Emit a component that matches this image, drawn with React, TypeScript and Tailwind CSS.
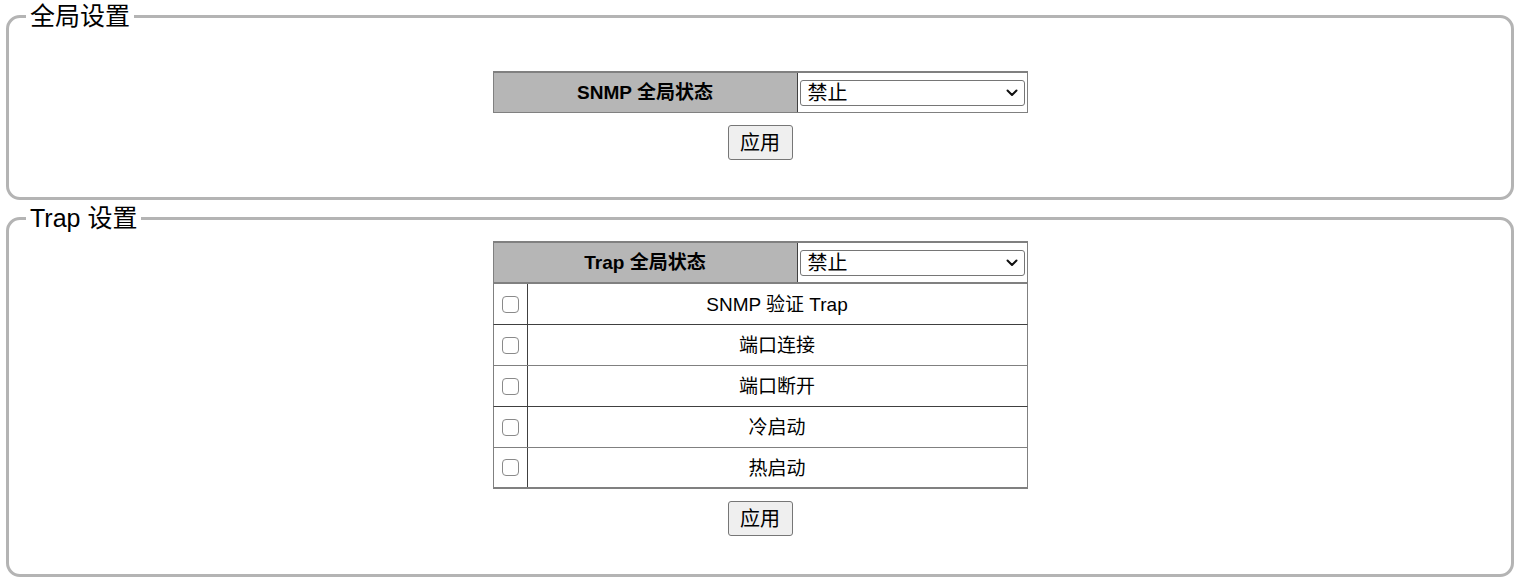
import React from 'react';

const font = { fontFamily: '"Liberation Sans", "Noto Sans CJK SC", sans-serif' };

function Chevron() {
  return (
    <svg width="12" height="8" viewBox="0 0 12 8" className="shrink-0">
      <path d="M1.5 1.5 L6 6 L10.5 1.5" fill="none" stroke="#111" strokeWidth="2" strokeLinecap="round" strokeLinejoin="round" />
    </svg>
  );
}

function FakeSelect() {
  return (
    <div className="w-[225px] h-[26px] border border-[#767676] rounded-[3px] bg-white flex items-center justify-between pl-[7px] pr-[6px]">
      <span className="text-[20px] leading-[24px] text-black pt-[1px]">禁止</span>
      <Chevron />
    </div>
  );
}

function ApplyButton() {
  return (
    <button className="mt-[12px] h-[35px] w-[65px] border border-[#767676] rounded-[3px] bg-[#efefef] text-[20px] leading-[24px] text-black pt-[1px]">
      应用
    </button>
  );
}

function StatusRow({ label, tall }: { label: string; tall?: boolean }) {
  return (
    <div
      className={`w-[535px] flex border-x border-[#808080] border-t-2 ${tall ? 'h-[43px] border-b-2' : 'h-[42px] border-b'}`}
    >
      <div className="w-[304px] bg-[#b6b6b6] border-r border-[#404040] flex items-center justify-center">
        <span className="text-[19px] font-bold text-black pt-[2px]">{label}</span>
      </div>
      <div className="flex-1 flex items-center justify-center">
        <FakeSelect />
      </div>
    </div>
  );
}

const traps = [
  { label: 'SNMP 验证 Trap', line: 'border-b border-[#404040]' },
  { label: '端口连接', line: 'border-b border-[#808080]' },
  { label: '端口断开', line: 'border-b border-[#404040]' },
  { label: '冷启动', line: 'border-b border-[#808080]' },
  { label: '热启动', line: 'border-b-2 border-[#808080]' },
];

export default function App() {
  return (
    <div className="w-[1520px] h-[582px] bg-white text-black overflow-hidden" style={font}>
      {/* 全局设置 */}
      <fieldset className="mx-[6px] border-[3px] border-[#b4b4b4] rounded-[14px] px-[17px]">
        <legend className="px-[4px] text-[25px] leading-[32px]">全局设置</legend>
        <div className="flex flex-col items-center pt-[39px] pb-[37px]">
          <StatusRow label="SNMP 全局状态" />
          <ApplyButton />
        </div>
      </fieldset>

      {/* Trap 设置 */}
      <fieldset className="mx-[6px] mt-[2px] border-[3px] border-[#b4b4b4] rounded-[14px] px-[17px]">
        <legend className="px-[4px] text-[25px] leading-[32px]">Trap 设置</legend>
        <div className="flex flex-col items-center pt-[7px] pb-[38px]">
          <StatusRow label="Trap 全局状态" tall />
          {traps.map((t) => (
            <div key={t.label} className={`w-[535px] h-[41px] flex border-x border-x-[#808080] ${t.line}`}>
              <div className="w-[34px] border-r border-[#404040] flex items-center justify-center">
                <input
                  type="checkbox"
                  className="appearance-none w-[17px] h-[17px] m-0 border-[1.5px] border-[#8a8a8a] rounded-[4px] bg-white"
                />
              </div>
              <div className="flex-1 flex items-center justify-center">
                <span className="text-[19px] pt-[3px]">{t.label}</span>
              </div>
            </div>
          ))}
          <ApplyButton />
        </div>
      </fieldset>
    </div>
  );
}
